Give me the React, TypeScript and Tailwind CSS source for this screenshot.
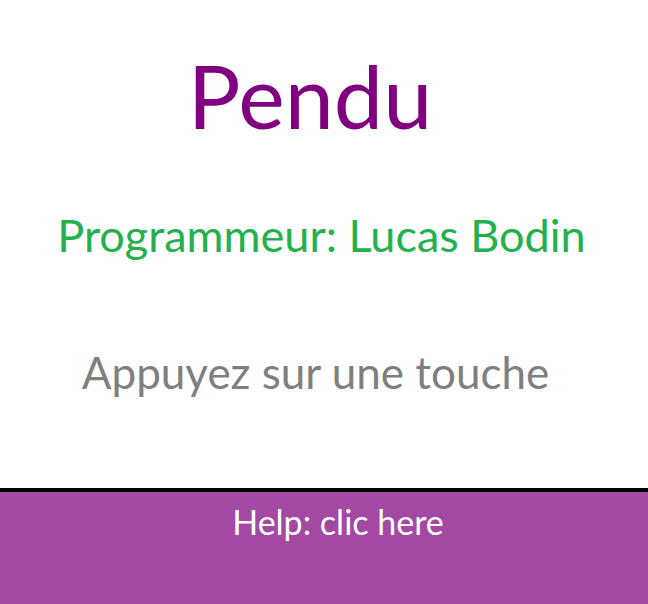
export default function App() {
  return (
    <div className="w-[648px] h-[604px] bg-white flex flex-col overflow-hidden" style={{ fontFamily: "Lato, 'Open Sans', sans-serif" }}>
      <div className="h-[488px] flex flex-col">
        <div className="h-[50px]" />
        <div className="pr-[28px] text-center text-[#800080] text-[88px] leading-[90px]">Pendu</div>
        <div className="h-[70px]" />
        <div className="pr-[5px] text-center text-[#22b14c] text-[45px] leading-[50px]">Programmeur: Lucas Bodin</div>
        <div className="h-[87px]" />
        <div className="pr-[17px] text-center text-[#7f7f7f] text-[44px] leading-[50px]">Appuyez sur une touche</div>
      </div>
      <div className="h-[4px] bg-black" />
      <div className="flex-1 bg-[#a349a4] flex justify-center pl-[28px] pt-[10px]">
        <span className="text-white text-[34px] leading-[40px]">Help: clic here</span>
      </div>
    </div>
  );
}
